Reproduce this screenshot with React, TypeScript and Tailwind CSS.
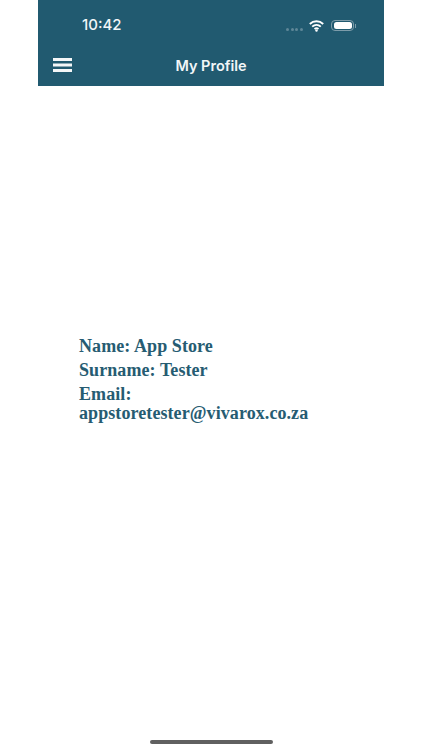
import React from 'react';

function MenuIcon() {
  return (
    <svg width="19" height="14" viewBox="0 0 19 14" fill="none" stroke="#f4f7f8" strokeWidth="2.9" className="block">
      <path d="M0 1.45H19M0 7H19M0 12.55H19" />
    </svg>
  );
}

function WifiIcon() {
  return (
    <svg width="15" height="12" viewBox="0 0 15 12" fill="none" stroke="#ffffff" strokeWidth="1.9" className="block">
      <path d="M0.8 4C4.6 0.4 10.4 0.4 14.2 4" />
      <path d="M3.2 6.6C5.7 4.4 9.3 4.4 11.8 6.6" />
      <path d="M5.5 9C6.7 8.1 8.3 8.1 9.5 9" />
      <circle cx="7.5" cy="10.6" r="1.2" fill="#ffffff" stroke="none" />
    </svg>
  );
}

function BatteryIcon() {
  return (
    <div className="flex items-center gap-[1px]">
      <div className="w-[23px] h-[11.5px] rounded-[4px] border border-[#7d9caa] p-[1.5px]">
        <div className="w-full h-full rounded-[2.5px] bg-white" />
      </div>
      <div className="w-[1px] h-[4px] bg-[#7d9caa]" />
    </div>
  );
}

export default function App() {
  return (
    <div className="w-[422px] h-[750px] bg-white flex flex-col overflow-hidden font-['Inter',sans-serif]">
      <header className="mx-[38px] w-[346px] h-[85.5px] shrink-0 bg-[#215a70] flex flex-col">
        <div className="h-[50px] flex items-end pl-[44px] pr-[28px] pb-[16px] justify-between">
          <span className="text-[15px] leading-[18px] font-medium text-[#f2f6f8]">10:42</span>
          <div className="flex items-center mb-[2.5px]">
            <div className="flex gap-[1.67px] mt-[7px] mr-[6px]">
              <span className="w-[3px] h-[3px] rounded-full bg-[#5f8798]" />
              <span className="w-[3px] h-[3px] rounded-full bg-[#5f8798]" />
              <span className="w-[3px] h-[3px] rounded-full bg-[#5f8798]" />
              <span className="w-[3px] h-[3px] rounded-full bg-[#5f8798]" />
            </div>
            <div className="mr-[7px]"><WifiIcon /></div>
            <BatteryIcon />
          </div>
        </div>
        <div className="flex-1 flex items-start relative px-[15px]">
          <div className="mt-[8px]"><MenuIcon /></div>
          <span className="absolute left-0 right-0 top-[6px] text-center text-[14.5px] leading-[20px] font-semibold text-[#f2f6f8]">My Profile</span>
        </div>
      </header>
      <main className="flex-1 pl-[79px] pt-[250px] font-['Liberation_Serif',serif] font-bold text-[18px] tracking-[0.08px] text-[#265c72]">
        <div className="leading-[20px] mb-[4px]">Name: App Store</div>
        <div className="leading-[20px] mb-[5px]">Surname: Tester</div>
        <div className="leading-[19px]">Email:</div>
        <div className="leading-[19px]">appstoretester@vivarox.co.za</div>
      </main>
      <footer className="h-[14px] shrink-0 flex justify-center pt-[4px]">
        <div className="w-[123px] h-[4px] rounded-full bg-[#606060]" />
      </footer>
    </div>
  );
}
